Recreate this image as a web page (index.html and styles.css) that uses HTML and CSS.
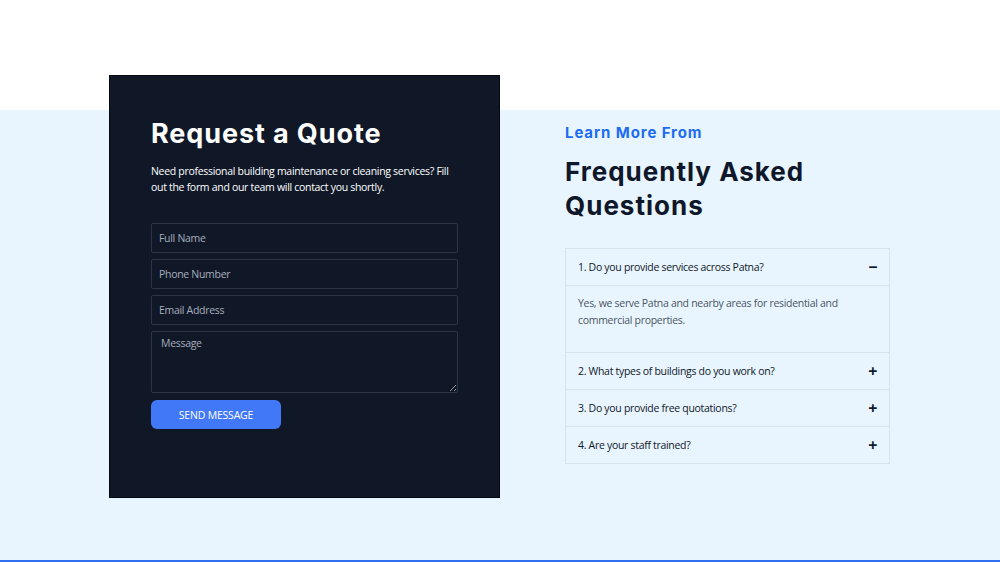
FILE: index.html
```html
<!DOCTYPE html>
<html lang="en">
<head>
  <meta charset="UTF-8" />
  <meta name="viewport" content="width=device-width, initial-scale=1.0"/>
  <title>Request a Quote</title>
  <link rel="stylesheet" href="styles.css">
</head>
<body>
  <div class="top-space"></div>

  <section class="quote-section">
    <div class="quote-grid">
      <div class="quote-card">
        <h2>Request a Quote</h2>
        <p class="quote-intro">Need professional building maintenance or cleaning services? Fill out the form and our team will contact you shortly.</p>

        <form class="quote-form" onsubmit="return false;">
          <input type="text" placeholder="Full Name" />
          <input type="text" placeholder="Phone Number" />
          <input type="email" placeholder="Email Address" />
          <textarea placeholder="Message"></textarea>
          <button type="submit">Send Message</button>
        </form>
      </div>

      <div class="faq">
        <span class="faq-label">Learn More From</span>
        <h2>Frequently Asked Questions</h2>

        <div class="faq-list">
          <div class="faq-item open">
            <div class="faq-question">1. Do you provide services across Patna? <span class="faq-icon">&minus;</span></div>
            <div class="faq-answer">Yes, we serve Patna and nearby areas for residential and commercial properties.</div>
          </div>
          <div class="faq-item">
            <div class="faq-question">2. What types of buildings do you work on? <span class="faq-icon">+</span></div>
          </div>
          <div class="faq-item">
            <div class="faq-question">3. Do you provide free quotations? <span class="faq-icon">+</span></div>
          </div>
          <div class="faq-item">
            <div class="faq-question">4. Are your staff trained? <span class="faq-icon">+</span></div>
          </div>
        </div>
      </div>
    </div>
  </section>
</body>
</html>
```

FILE: styles.css
```css
* {
  box-sizing: border-box;
}

body {
  margin: 0;
  font-family: "Open Sans", Arial, sans-serif;
  letter-spacing: -0.3px;
  background-color: #ffffff;
  color: #0f172a;
}

.top-space {
  height: 110px;
}

.quote-section {
  background-color: #e8f5ff;
  border-bottom: 2px solid #2f6ff0;
  padding-bottom: 62px;
}

.quote-grid {
  width: 782px;
  margin: 0 auto;
  display: grid;
  grid-template-columns: 391px 325px;
  column-gap: 65px;
  align-items: start;
}

/* dark card that overlaps the white band above */
.quote-card {
  margin-top: -35px;
  height: 423px;
  background-color: #101828;
  border: 1px solid #05080f;
  padding: 40px 41px;
  color: #ffffff;
}

.quote-card h2 {
  margin: 0;
  font-family: "Inter", sans-serif;
  font-weight: 700;
  font-size: 27px;
  line-height: 36px;
  letter-spacing: 0.9px;
}

.quote-intro {
  margin: 11px 0 28px;
  font-size: 10.5px;
  line-height: 16px;
}

.quote-form {
  display: flex;
  flex-direction: column;
  gap: 6px;
}

.quote-form input,
.quote-form textarea {
  width: 307px;
  height: 30px;
  padding: 0 7px;
  background: transparent;
  border: 1px solid #2c3546;
  border-radius: 2px;
  color: #ffffff;
  font-family: "Open Sans", Arial, sans-serif;
  font-size: 10.5px;
  letter-spacing: -0.3px;
}

.quote-form textarea {
  height: 62px;
  padding: 4px 9px;
  resize: vertical;
}

.quote-form input::placeholder,
.quote-form textarea::placeholder {
  color: #a6adbb;
}

.quote-form button {
  width: 130px;
  height: 29px;
  margin-top: 1px;
  background-color: #4178f7;
  border: none;
  border-radius: 6px;
  color: #ffffff;
  font-family: "Open Sans", Arial, sans-serif;
  font-size: 10.5px;
  letter-spacing: -0.2px;
  text-transform: uppercase;
  cursor: pointer;
}

.faq {
  padding-top: 14px;
}

.faq-label {
  display: block;
  color: #1d6cf2;
  font-family: "Inter", sans-serif;
  font-weight: 700;
  font-size: 15px;
  line-height: 18px;
  letter-spacing: 0.9px;
}

.faq h2 {
  margin: 13px 0 25px;
  font-family: "Inter", sans-serif;
  font-weight: 700;
  font-size: 26px;
  line-height: 34px;
  letter-spacing: 1px;
  width: 290px;
}

.faq-list {
  border: 1px solid #d5e3ef;
}

.faq-item + .faq-item {
  border-top: 1px solid #d5e3ef;
}

.faq-question {
  display: flex;
  justify-content: space-between;
  align-items: center;
  height: 36px;
  padding: 0 12px 0 12px;
  font-size: 10.5px;
  color: #111827;
}

.faq-icon {
  font-size: 16px;
  font-weight: 700;
  color: #111827;
}

.faq-answer {
  border-top: 1px solid #d5e3ef;
  padding: 9px 12px 24px;
  height: 67px;
  font-size: 10.5px;
  line-height: 17px;
  color: #4b5563;
}
```
